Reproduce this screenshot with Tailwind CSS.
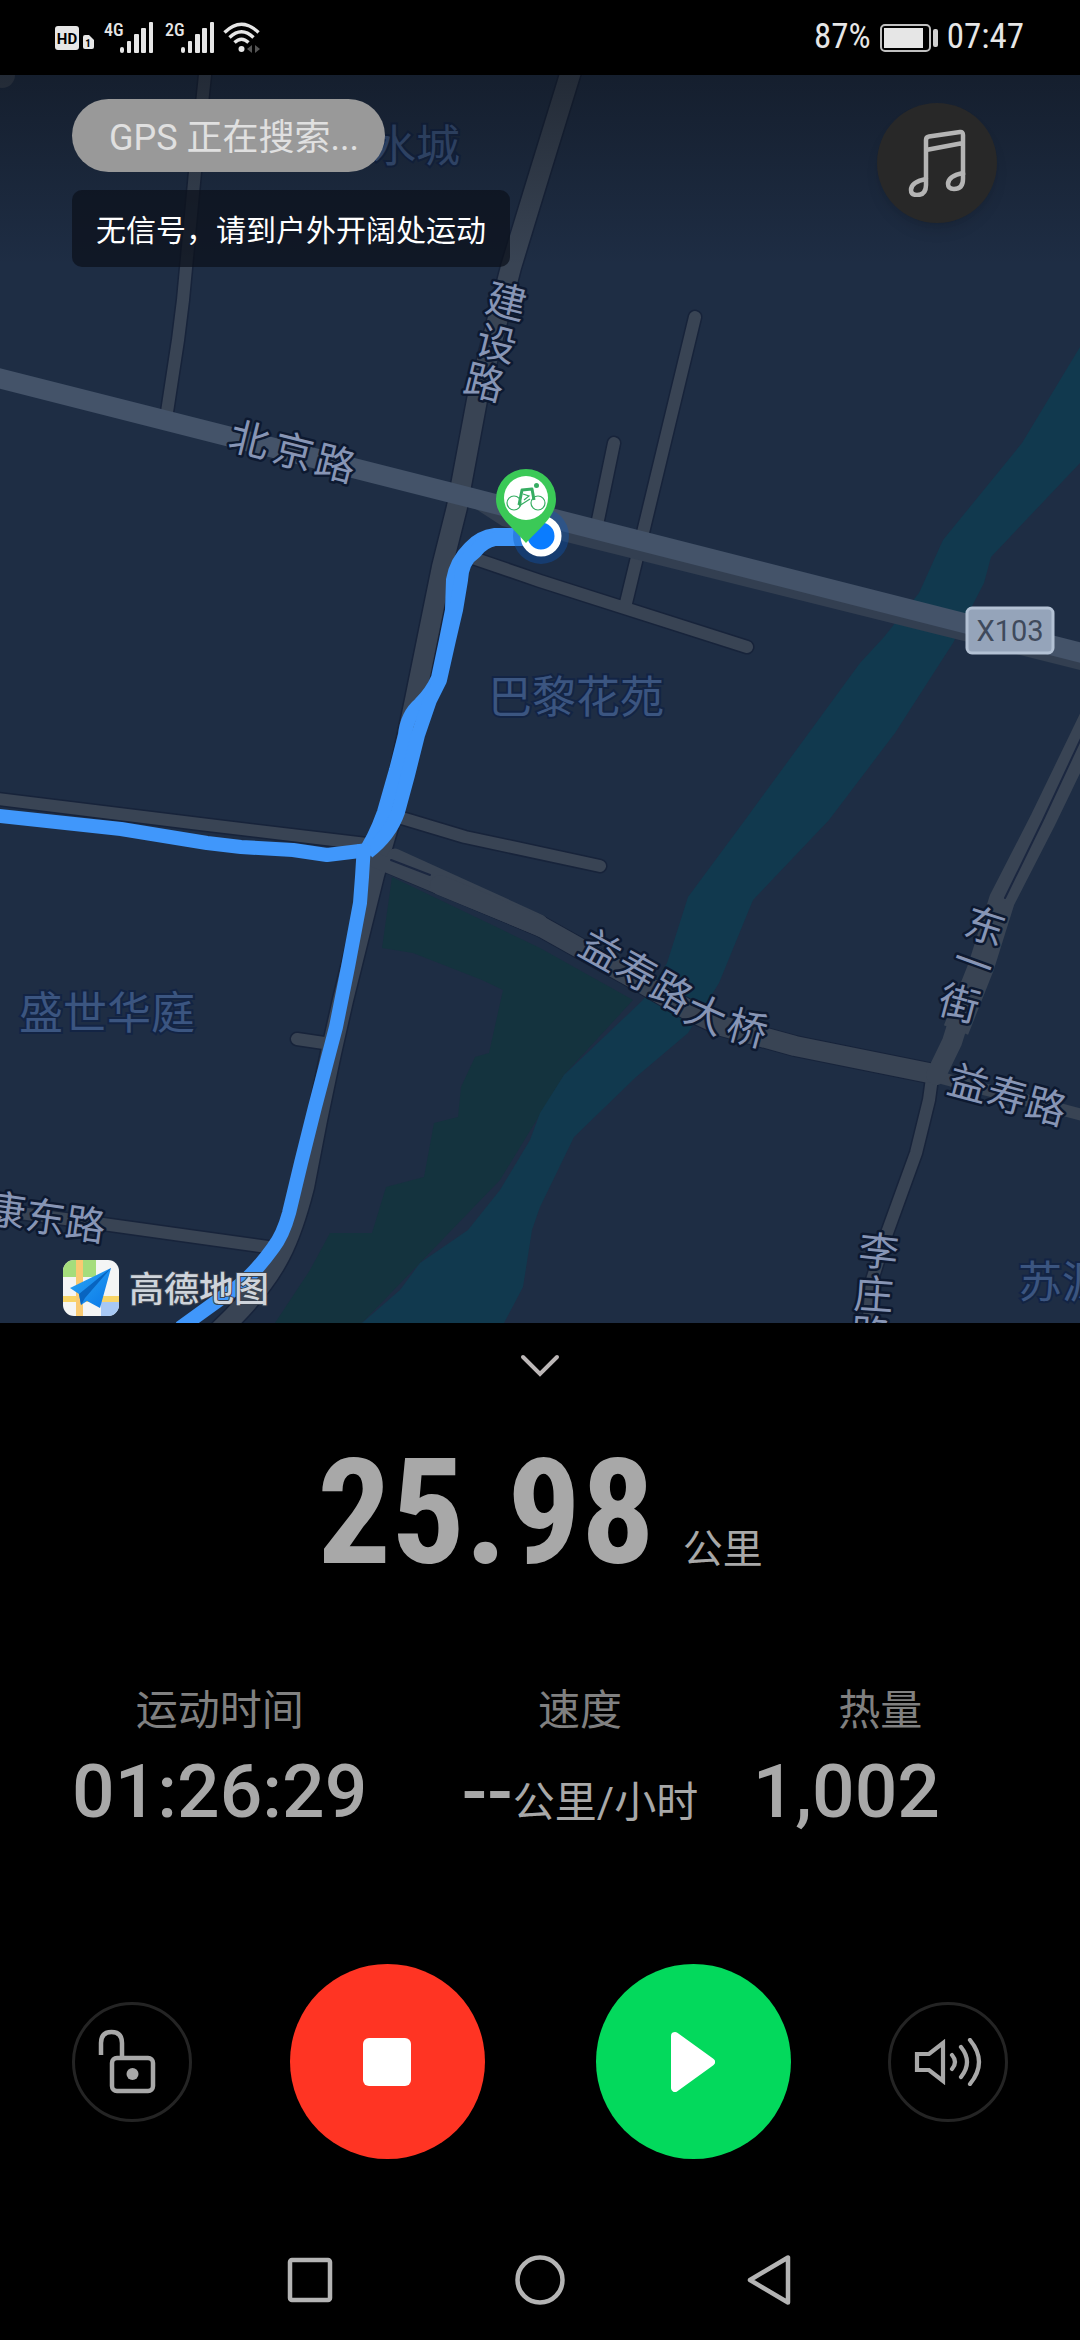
<!DOCTYPE html>
<html lang="zh-CN">
<head>
    <meta charset="UTF-8">
    <meta name="viewport" content="width=device-width, initial-scale=1.0">
    <title>户外骑行</title>
    <script src="https://cdn.jsdelivr.net/npm/@tailwindcss/browser@4"></script>
</head>
<body class="bg-black">
<div class="min-h-screen flex flex-col bg-black text-[#a8a8a8] font-[Roboto,'Noto_Sans_CJK_SC',sans-serif]">

    <!-- status bar -->
    <header class="h-[75px] shrink-0 flex items-center justify-between pl-[55px] pr-14 text-[#e6e6e6] font-['Roboto_Condensed',Roboto,sans-serif]">
        <div class="flex items-center">
            <svg class="w-10 h-8" viewBox="0 0 40 32" aria-label="HD 1">
                <rect x="0" y="4" width="24" height="24" rx="3" fill="#e6e6e6"/>
                <text x="12" y="22" text-anchor="middle" font-family="Roboto, sans-serif" font-size="15" font-weight="700" fill="#000">HD</text>
                <path d="M28 15q0-2 2-2h4l5 5v7q0 2-2 2h-7q-2 0-2-2z" fill="#e6e6e6"/>
                <text x="33" y="25" text-anchor="middle" font-size="11" font-weight="700" fill="#000">1</text>
            </svg>
            <span class="self-start ml-[9px] w-4 text-[18px] leading-4 font-medium">4G</span>
            <svg class="w-[34px] h-8 fill-[#e6e6e6]" viewBox="0 0 34 32">
                <rect x="0" y="25" width="4" height="6" rx="2"/><rect x="7" y="19" width="4" height="12" rx="1"/><rect x="14" y="12" width="5" height="19" rx="1"/><rect x="21" y="6" width="5" height="25" rx="1"/><rect x="29" y="0" width="4" height="31" rx="1"/>
            </svg>
            <span class="self-start ml-[11px] w-4 text-[18px] leading-4 font-medium">2G</span>
            <svg class="w-[34px] h-8 fill-[#e6e6e6]" viewBox="0 0 34 32">
                <rect x="0" y="25" width="4" height="6" rx="2"/><rect x="7" y="19" width="4" height="12" rx="1"/><rect x="14" y="12" width="5" height="19" rx="1"/><rect x="21" y="6" width="5" height="25" rx="1"/><rect x="29" y="0" width="4" height="31" rx="1"/>
            </svg>
            <svg class="ml-2 w-[38px] h-8" viewBox="0 0 38 32" fill="none" stroke="#e6e6e6" stroke-width="3.4">
                <path d="M1.500 10.500Q18.500-6 35.500 10.500M6.500 15.500Q18.500 4 30.500 15.500M11.500 20.500Q18.500 14 25.500 20.500"/>
                <circle cx="18.500" cy="27" r="3" fill="#e6e6e6" stroke="none"/>
                <path d="M29 23v8l-5-4zM32 23v8l5-4z" fill="#555" stroke="none"/>
            </svg>
        </div>
        <div class="flex items-center text-[35px]">
            <span>87%</span>
            <svg class="mx-[9px] w-[58px] h-7" viewBox="0 0 58 28">
                <rect x="1" y="1" width="49" height="26" rx="4" fill="none" stroke="#c0c0c0" stroke-width="2"/>
                <rect x="4" y="4" width="39" height="20" fill="#e6e6e6"/>
                <rect x="53" y="5" width="5" height="18" rx="2" fill="#d0d0d0"/>
            </svg>
            <span>07:47</span>
        </div>
    </header>

    <!-- map -->
    <main class="relative">
        <svg class="block w-full h-auto" viewBox="0 75 1080 1248" role="img" aria-label="骑行轨迹地图">
            <defs>
                <linearGradient id="shade" x1="0" y1="0" x2="0" y2="1">
                    <stop offset="0" stop-color="#0b0f16" stop-opacity=".48"/>
                    <stop offset="1" stop-color="#0b0f16" stop-opacity="0"/>
                </linearGradient>
                <linearGradient id="plane" x1="0" y1="0" x2="1" y2="1">
                    <stop offset="0" stop-color="#2aa5f5"/>
                    <stop offset="1" stop-color="#0a78e8"/>
                </linearGradient>
            </defs>
            <rect y="75" width="1080" height="1248" fill="#1e2d44"/>

            <!-- park and river -->
            <path fill="#14333e" d="M392 877L540 948L633 1000L564 1075L500 1180L362 1323H275L310 1270L330 1233H372L386 1187L424 1177L434 1123L458 1117L461 1087L475 1057L489 1053L503 990L482 980L413 953L382 948Z"/>
            <path fill="#11394e" d="M1080 347L1022 443L943 540L919 593L884 637L860 663L745 820L688 897L667 963L643 1000L564 1075L540 1113L530 1140L500 1190L468 1230L420 1263L400 1290L362 1323H504L523 1287L532 1230L540 1207L574 1137L636 1077L688 1033L719 983L753 900L829 820L895 733L953 643L984 583L991 557L1080 463Z"/>

            <!-- roads: dark casing first, surface on top -->
            <g fill="none" stroke="#17233a" stroke-linecap="round" stroke-linejoin="round">
                <path stroke-width="15" d="M206 65L195 172L183 300L178 340L167 412M695 317L626 603M614 443L598 520M470 557L540 581L747 647M297 1039L324 1043M-10 1209L103 1224L275 1248M-10 798L200 824L375 845M395 816L465 837L600 866M932 1078L929 1100L916 1153L887 1233L872 1280L868 1330"/>
                <path stroke-width="23" d="M573 65L540 172L511 267L477 400L457 507L442 567L415 700L390 820L374 875L343 1000L331 1053L317 1120L304 1187Q293 1230 280 1255Q262 1290 220 1330"/>
                <path stroke-width="22" d="M383 860L540 926L640 982L690 1011L722 1026L795 1046L929 1073"/>
            </g>
            <g fill="none" stroke="#394454" stroke-linecap="round" stroke-linejoin="round">
                <circle cx="2" cy="75" r="13" fill="#394454" stroke="none"/>
                <path stroke-width="12" d="M206 65L195 172L183 300L178 340L167 412M695 317L626 603M614 443L598 520M470 557L540 581L747 647M297 1039L324 1043M-10 1209L103 1224L275 1248M-10 798L200 824L375 845M395 816L465 837L600 866M932 1078L929 1100L916 1153L887 1233L872 1280L868 1330M930 1075L1090 1117"/>
                <path stroke-width="20" d="M573 65L540 172L511 267L477 400L457 507L442 567L415 700L390 820L374 875L343 1000L331 1053L317 1120L304 1187Q293 1230 280 1255Q262 1290 220 1330"/>
                <path stroke-width="15" d="M375 860L540 929M395 856L540 922"/>
                <path stroke-width="20" d="M440 885L540 926L640 982L690 1011L722 1026L795 1046L929 1073"/>
                <path stroke-width="26" stroke-linecap="butt" d="M1100 702L1043 820L1002 900L981 967L956 1030"/>
                <path stroke-width="20" d="M962 1010L952 1042L936 1075"/>
                <path stroke="#1b2740" stroke-width="2" d="M1085 730L1043 820L1005 898M391 860L430 875"/>
            </g>
            <path d="M465 502L502 526L1080 670V650Z" fill="#333f51"/>
            <path d="M-10 376L448 492L1090 655" stroke="#445369" stroke-width="20" fill="none"/>

            <!-- place names -->
            <g font-family="Noto Sans CJK SC, sans-serif" font-size="44" fill="#3b5580" stroke="#132444" stroke-width="4" paint-order="stroke" dominant-baseline="central">
                <text x="372" y="143">水城</text>
                <text x="488" y="694">巴黎花苑</text>
                <text x="19" y="1010">盛世华庭</text>
                <text x="1018" y="1279">苏源</text>
            </g>
            <!-- road names, one glyph per step along the road -->
            <g font-family="Noto Sans CJK SC, sans-serif" font-size="40" fill="#8795b5" stroke="#0d1930" stroke-width="5" stroke-linejoin="round" paint-order="stroke" text-anchor="middle" dominant-baseline="central">
                <text transform="translate(507 299) rotate(14)">建</text>
                <text transform="translate(497 341) rotate(14)">设</text>
                <text transform="translate(485 380) rotate(14)">路</text>
                <text transform="translate(250 437) rotate(14)">北</text>
                <text transform="translate(294 449) rotate(14)">京</text>
                <text transform="translate(336 461) rotate(14)">路</text>
                <text transform="translate(602 948) rotate(29)">益</text>
                <text transform="translate(638 969) rotate(29)">寿</text>
                <text transform="translate(673 990) rotate(30)">路</text>
                <text transform="translate(707 1012) rotate(24)">大</text>
                <text transform="translate(748 1026) rotate(15)">桥</text>
                <text transform="translate(969 1081) rotate(15)">益</text>
                <text transform="translate(1008 1093) rotate(15)">寿</text>
                <text transform="translate(1047 1104) rotate(15)">路</text>
                <text transform="translate(986 924) rotate(18)">东</text>
                <text transform="translate(974 961) rotate(20)">一</text>
                <text transform="translate(960 1001) rotate(15)">街</text>
                <text transform="translate(879 1249) rotate(6)">李</text>
                <text transform="translate(874 1292) rotate(4)">庄</text>
                <text transform="translate(871 1332) rotate(4)">路</text>
                <text transform="translate(6 1208) rotate(8)">康</text>
                <text transform="translate(46 1215) rotate(8)">东</text>
                <text transform="translate(86 1222) rotate(8)">路</text>
            </g>

            <!-- road number shield -->
            <rect x="967" y="608" width="86" height="45" rx="5" fill="#95a4ba" stroke="#b3c1d4" stroke-width="3"/>
            <text x="1010" y="641" text-anchor="middle" font-family="Roboto, sans-serif" font-size="29" fill="#3f4a5c">X103</text>

            <!-- ride track -->
            <g fill="none" stroke="#4097fb" stroke-width="14" stroke-linejoin="round">
                <path d="M525 535H495Q480 537 470 548Q456 562 453 580L452 610L446 640L438 678Q432 692 420 704Q407 715 405 735L396 770L384 812Q374 840 362 856"/>
                <path d="M525 539H495Q482 542 475 552Q462 560 461 580L456 610L449 640L440 680L430 700L418 735L408 775L398 812Q390 835 368 852"/>
                <path d="M-10 815L121 829L207 843L241 847L293 850L327 855L368 850"/>
                <path d="M364 845L362 877L360 903L348 967L336 1027L315 1107L301 1163L289 1213Q283 1235 273 1248Q250 1280 227 1294L180 1328"/>
            </g>

            <!-- current position and start pin -->
            <circle cx="541" cy="536" r="28" fill="#0a58b8" fill-opacity=".38"/>
            <circle cx="541" cy="536" r="17" fill="#0a7cff" stroke="#fff" stroke-width="7"/>
            <path fill="#3bc957" d="M526 469a30 30 0 0 1 30 30c0 16-12 25-30 44c-17-19-30-28-30-44a30 30 0 0 1 30-30z"/>
            <circle cx="526" cy="498" r="22" fill="#fff"/>
            <g fill="none" stroke="#36ad62" stroke-width="1.200">
                <circle cx="514" cy="503" r="7"/>
                <circle cx="538" cy="503" r="7"/>
                <path stroke-width="3" stroke-linejoin="round" d="M519 505L522 490L532 489L534 500"/>
                <path d="M523 494L529 496L524 500M519 506L530 499"/>
                <circle cx="536.500" cy="485.500" r="2.500" fill="#36ad62" stroke="none"/>
            </g>

            <!-- map provider logo -->
            <g>
                <clipPath id="tile"><rect x="63" y="1260" width="56" height="56" rx="11"/></clipPath>
                <g clip-path="url(#tile)">
                    <rect x="63" y="1260" width="56" height="56" fill="#f4f5f5"/>
                    <path d="M63 1260h33v17H63z" fill="#a5dd7c"/>
                    <path d="M101 1301h18v15h-18z" fill="#a7c8f5"/>
                    <path d="M63 1296h56v6H63z" fill="#f8d568"/>
                    <path d="M76 1260h7v56h-7z" fill="#f9ca72"/>
                </g>
                <path d="M111 1268L70 1288L79 1294L81 1305L87 1301L100 1308Z" fill="url(#plane)"/>
                <path d="M111 1268L79 1294L81 1305L85 1298Z" fill="#0864c0"/>
                <text x="129" y="1286" dominant-baseline="central" font-family="Noto Sans CJK SC, sans-serif" font-size="35" font-weight="500" fill="#cfd4db" stroke="#3a4350" stroke-width="2" paint-order="stroke">高德地图</text>
            </g>
            <rect y="75" width="1080" height="190" fill="url(#shade)"/>
        </svg>

        <!-- floating controls above the map -->
        <div class="absolute inset-x-0 top-0 flex items-start justify-between pl-[72px] pr-[83px] pt-6">
            <div class="flex flex-col items-start gap-[18px]">
                <p class="h-[73px] flex items-center pt-1 pl-[37px] pr-[26px] rounded-full bg-[#999] text-4xl text-[#e0e0e0]">GPS 正在搜索...</p>
                <p class="h-[77px] flex items-center pt-1 px-6 rounded-[10px] bg-[#0c121c]/75 text-[30px] text-white">无信号，请到户外开阔处运动</p>
            </div>
            <button type="button" aria-label="音乐" class="mt-1 size-[120px] rounded-full bg-[#282828] shadow-lg flex items-center justify-center">
                <svg class="w-[60px] h-[68px]" viewBox="0 0 60 68" fill="none" stroke="#b4b4b4" stroke-width="4.500" stroke-linejoin="round">
                    <path d="M19 50V11Q19 8 22 7.500L53 3Q56 2.500 56 6V46M19 21L56 14"/>
                    <path d="M19 50C9 52 4 56 4 61Q4 66 10 66Q19 66 19 56ZM56 44C46 46 41 50 41 55Q41 60 47 60Q56 60 56 50Z"/>
                </svg>
            </button>
        </div>
    </main>

    <!-- workout data -->
    <section class="grow flex flex-col">
        <button type="button" aria-label="收起" class="self-center mt-6 w-20 h-9 flex items-center justify-center">
            <svg class="w-10 h-6" viewBox="0 0 40 24" fill="none" stroke="#bdb8b8" stroke-width="4" stroke-linecap="round"><path d="M3 4L20 21L37 4"/></svg>
        </button>
        <p class="mt-[43px] flex items-baseline justify-center gap-[28px]">
            <span class="text-[146px] leading-[176px] font-bold font-['Noto_Sans_ExtraCondensed','Roboto_Condensed',Roboto,sans-serif]">25.98</span>
            <span class="text-[40px]">公里</span>
        </p>
        <dl class="mt-[79px] px-[72px] flex justify-between items-start">
            <div class="flex flex-col items-center">
                <dt class="text-[42px] leading-[60px] text-[#808080]">运动时间</dt>
                <dd class="text-[75px] leading-[100px] font-medium">01:26:29</dd>
            </div>
            <div class="ml-10 flex flex-col items-center">
                <dt class="text-[42px] leading-[60px] text-[#808080]">速度</dt>
                <dd class="text-[75px] leading-[100px] font-medium">--<span class="text-[42px] font-normal">公里/小时</span></dd>
            </div>
            <div class="flex flex-col items-center">
                <dt class="text-[42px] leading-[60px] text-[#808080]">热量</dt>
                <dd class="pr-[68px] text-[75px] leading-[100px] font-medium">1,002</dd>
            </div>
        </dl>

        <div class="mt-[111px] px-[72px] flex items-center justify-between">
            <button type="button" aria-label="解锁" class="size-[120px] pr-[10px] rounded-full border-3 border-[#242424] flex items-center justify-center">
                <svg class="w-[60px] h-[66px]" viewBox="0 0 60 66" fill="none" stroke="#a8a8a8" stroke-width="4.500">
                    <path d="M4 26V14Q4 3 14.500 3Q25 3 25 14V28"/>
                    <rect x="15" y="29" width="41" height="33" rx="5"/>
                    <circle cx="35.500" cy="45" r="6" fill="#a8a8a8" stroke="none"/>
                </svg>
            </button>
            <div class="flex gap-[111px]">
                <button type="button" aria-label="停止" class="size-[195px] rounded-full bg-[#ff3423] flex items-center justify-center">
                    <svg class="size-12" viewBox="0 0 48 48"><rect width="48" height="48" rx="6" fill="#fff"/></svg>
                </button>
                <button type="button" aria-label="继续" class="size-[195px] rounded-full bg-[#03d95c] flex items-center justify-center">
                    <svg class="w-11 h-15" viewBox="0 0 44 60"><path d="M4 4L40 30L4 56Z" fill="#fff" stroke="#fff" stroke-width="8" stroke-linejoin="round"/></svg>
                </button>
            </div>
            <button type="button" aria-label="音量" class="size-[120px] rounded-full border-3 border-[#242424] flex items-center justify-center">
                <svg class="w-[68px] h-12" viewBox="0 0 68 48" fill="none" stroke="#a8a8a8" stroke-width="4.200" stroke-linecap="round">
                    <path d="M3 16H15L29 5V43L15 32H3Z"/>
                    <path d="M38 17Q44 24 38 31M47 9Q59 24 47 39M56 2Q74 24 56 46"/>
                </svg>
            </button>
        </div>
    </section>

    <!-- system navigation -->
    <nav class="h-[120px] shrink-0 flex items-center justify-center gap-[180px]">
        <button type="button" aria-label="最近任务" class="size-[50px]">
            <svg class="size-full" viewBox="0 0 50 50"><rect x="5" y="5" width="40" height="40" rx="2" fill="none" stroke="#b4b4b4" stroke-width="4.500"/></svg>
        </button>
        <button type="button" aria-label="主页" class="size-[50px]">
            <svg class="size-full" viewBox="0 0 50 50"><circle cx="25" cy="25" r="22.500" fill="none" stroke="#b4b4b4" stroke-width="4.500"/></svg>
        </button>
        <button type="button" aria-label="返回" class="size-[50px]">
            <svg class="size-full" viewBox="0 0 50 50"><path d="M43 2.500V47.500L5 25Z" fill="none" stroke="#b4b4b4" stroke-width="4.500" stroke-linejoin="round"/></svg>
        </button>
    </nav>
</div>
</body>
</html>
